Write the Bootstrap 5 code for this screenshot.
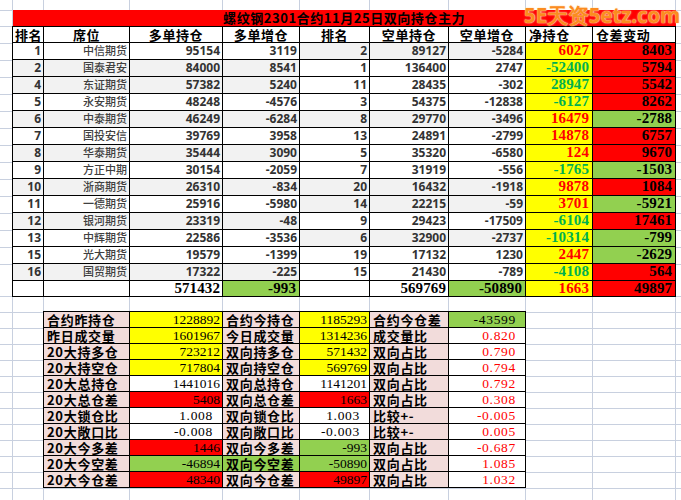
<!doctype html>
<html lang="zh"><head><meta charset="utf-8">
<link href="https://cdn.jsdelivr.net/npm/bootstrap@5.3.0/dist/css/bootstrap.min.css" rel="stylesheet">
<style>
:root{--gl:#c8d0df}
body{background-color:#fff;margin:0;height:500px;overflow:hidden;background-repeat:no-repeat;
background-image:
linear-gradient(var(--gl),var(--gl)),linear-gradient(var(--gl),var(--gl)),linear-gradient(var(--gl),var(--gl)),linear-gradient(var(--gl),var(--gl)),linear-gradient(var(--gl),var(--gl)),linear-gradient(var(--gl),var(--gl)),linear-gradient(var(--gl),var(--gl)),linear-gradient(var(--gl),var(--gl)),linear-gradient(var(--gl),var(--gl)),linear-gradient(var(--gl),var(--gl)),
linear-gradient(var(--gl),var(--gl)),linear-gradient(var(--gl),var(--gl)),
repeating-linear-gradient(var(--gl) 0 1px,transparent 1px 17px),
repeating-linear-gradient(var(--gl) 0 1px,transparent 1px 16px);
background-size:1px 100%,1px 100%,1px 100%,1px 100%,1px 100%,1px 100%,1px 100%,1px 100%,1px 100%,1px 100%,100% 1px,100% 1px,100% 238px,100% 193px;
background-position:12px 0,43px 0,129px 0,222px 0,299px 0,369px 0,448px 0,525px 0,592px 0,675px 0,0 10px,0 26px,0 43px,0 296px}
.sheet{padding:10px 0 0 12px;width:681px}
.top-grid,.low-grid{border-collapse:collapse;table-layout:fixed;margin:0}
.top-grid td,.top-grid th,.low-grid td{border:1px solid #000;padding:0 2px;white-space:nowrap;line-height:13px;vertical-align:middle}
.top-grid{width:663px;font-family:"Noto Sans",sans-serif;color:#333}
.top-grid td{height:17px;font-size:12px;font-weight:700;text-align:right;background:#fff}
.top-grid th{height:16px;font-family:"Noto Sans CJK SC",sans-serif;font-size:13px;font-weight:700;text-align:center;color:#000;background:#fff;letter-spacing:.6px}
.top-grid th.left{text-align:left;padding-left:3px}
.top-grid th.title{background:#f00;border-top:0;border-left:0;border-right:0;letter-spacing:.55px}
.top-grid tr.lg td:nth-child(-n+4),.top-grid tr.rg td:nth-child(n+5):nth-child(-n+7){background:#f2f2f2}
.top-grid td.cn{font-family:"Noto Sans CJK SC",sans-serif;font-size:11px;font-weight:500;color:#404040}
.top-grid tr.tot td{height:16px}
.top-grid td.sum{font-family:"Liberation Serif",serif;font-size:15px;color:#000;letter-spacing:.1px}
.top-grid tr td.y,.top-grid tr td.r,.top-grid tr td.g{font-family:"Liberation Serif",serif;font-size:15px;padding-right:3px;color:#000;letter-spacing:.1px}
.top-grid tr td.y{background:#ff0}.top-grid tr td.r{background:#f00}.top-grid tr td.g{background:#92d050}
.top-grid tr td.txt-r{color:#f00}.top-grid tr td.txt-g{color:#00b050}
.low-grid{width:482px;margin:14px 0 0 31px;font-family:"Liberation Serif",serif;color:#000}
.low-grid td{height:16px;font-size:13.5px;text-align:right;background:#fff}
.low-grid td.lab{font-family:"Noto Sans CJK SC",sans-serif;font-weight:700;font-size:13px;text-align:left;background:#f2dcdb;letter-spacing:.7px;padding-left:3px}
.low-grid td.yy{background:#ff0}.low-grid td.rr{background:#f00}.low-grid td.gg{background:#92d050}
.low-grid td.lab.gg{background:#92d050}
.low-grid td.red{color:#f00;padding-right:9px;letter-spacing:.7px}
.low-grid td.pr{padding-right:9px;letter-spacing:.7px}
.wm{position:absolute;left:524px;top:1px;font:700 20.5px/28px "Noto Sans",sans-serif;color:#fb8c1f;letter-spacing:-.1px;white-space:nowrap;text-shadow:0 0 2px #ffe0b0,0 0 1px #ffe0b0}
</style></head><body>
<div class="sheet">
<table class="table top-grid"><colgroup><col style="width:31px"><col style="width:86px"><col style="width:93px"><col style="width:77px"><col style="width:70px"><col style="width:79px"><col style="width:77px"><col style="width:67px"><col style="width:83px"></colgroup>
<thead><tr><th colspan="9" class="title">螺纹钢2301合约11月25日双向持仓主力</th></tr>
<tr><th>排名</th><th>席位</th><th>多单持仓</th><th>多单增仓</th><th>排名</th><th>空单持仓</th><th>空单增仓</th><th class="left">净持仓</th><th class="left">仓差变动</th></tr></thead>
<tbody>
<tr class="rg"><td>1</td><td class="cn">中信期货</td><td>95154</td><td>3119</td><td>2</td><td>89127</td><td>-5284</td><td class="y txt-r">6027</td><td class="r">8403</td></tr>
<tr class="lg"><td>2</td><td class="cn">国泰君安</td><td>84000</td><td>8541</td><td>1</td><td>136400</td><td>2747</td><td class="y txt-g">-52400</td><td class="r">5794</td></tr>
<tr class="lg"><td>4</td><td class="cn">东证期货</td><td>57382</td><td>5240</td><td>11</td><td>28435</td><td>-302</td><td class="y txt-g">28947</td><td class="r">5542</td></tr>
<tr><td>5</td><td class="cn">永安期货</td><td>48248</td><td>-4576</td><td>3</td><td>54375</td><td>-12838</td><td class="y txt-g">-6127</td><td class="r">8262</td></tr>
<tr class="lg rg"><td>6</td><td class="cn">中泰期货</td><td>46249</td><td>-6284</td><td>8</td><td>29770</td><td>-3496</td><td class="y txt-r">16479</td><td class="g">-2788</td></tr>
<tr><td>7</td><td class="cn">国投安信</td><td>39769</td><td>3958</td><td>13</td><td>24891</td><td>-2799</td><td class="y txt-r">14878</td><td class="r">6757</td></tr>
<tr class="lg"><td>8</td><td class="cn">华泰期货</td><td>35444</td><td>3090</td><td>5</td><td>35320</td><td>-6580</td><td class="y txt-r">124</td><td class="r">9670</td></tr>
<tr><td>9</td><td class="cn">方正中期</td><td>30154</td><td>-2059</td><td>7</td><td>31919</td><td>-556</td><td class="y txt-g">-1765</td><td class="g">-1503</td></tr>
<tr class="lg rg"><td>10</td><td class="cn">浙商期货</td><td>26310</td><td>-834</td><td>20</td><td>16432</td><td>-1918</td><td class="y txt-r">9878</td><td class="r">1084</td></tr>
<tr class="rg"><td>11</td><td class="cn">一德期货</td><td>25916</td><td>-5980</td><td>14</td><td>22215</td><td>-59</td><td class="y txt-r">3701</td><td class="g">-5921</td></tr>
<tr class="lg"><td>12</td><td class="cn">银河期货</td><td>23319</td><td>-48</td><td>9</td><td>29423</td><td>-17509</td><td class="y txt-g">-6104</td><td class="r">17461</td></tr>
<tr class="rg"><td>13</td><td class="cn">中辉期货</td><td>22586</td><td>-3536</td><td>6</td><td>32900</td><td>-2737</td><td class="y txt-g">-10314</td><td class="g">-799</td></tr>
<tr><td>15</td><td class="cn">光大期货</td><td>19579</td><td>-1399</td><td>19</td><td>17132</td><td>1230</td><td class="y txt-r">2447</td><td class="g">-2629</td></tr>
<tr class="lg"><td>16</td><td class="cn">国贸期货</td><td>17322</td><td>-225</td><td>15</td><td>21430</td><td>-789</td><td class="y txt-g">-4108</td><td class="r">564</td></tr>
<tr class="tot"><td></td><td></td><td class="sum">571432</td><td class="g">-993</td><td></td><td class="sum">569769</td><td class="g">-50890</td><td class="y txt-r">1663</td><td class="r">49897</td></tr>
</tbody></table>
<table class="table low-grid"><colgroup><col style="width:86px"><col style="width:93px"><col style="width:77px"><col style="width:70px"><col style="width:79px"><col style="width:77px"></colgroup>
<tbody>
<tr><td class="lab">合约昨持仓</td><td class="yy">1228892</td><td class="lab">合约今持仓</td><td class="yy">1185293</td><td class="lab">合约今仓差</td><td class="gg pr">-43599</td></tr>
<tr><td class="lab">昨日成交量</td><td class="yy">1601967</td><td class="lab">今日成交量</td><td class="yy">1314236</td><td class="lab">成交量比</td><td class="red">0.820</td></tr>
<tr><td class="lab">20大持多仓</td><td class="yy">723212</td><td class="lab">双向持多仓</td><td class="yy">571432</td><td class="lab">双向占比</td><td class="red">0.790</td></tr>
<tr><td class="lab">20大持空仓</td><td class="yy">717804</td><td class="lab">双向持空仓</td><td class="yy">569769</td><td class="lab">双向占比</td><td class="red">0.794</td></tr>
<tr><td class="lab">20大总持仓</td><td>1441016</td><td class="lab">双向总持仓</td><td>1141201</td><td class="lab">双向占比</td><td class="red">0.792</td></tr>
<tr><td class="lab">20大总仓差</td><td class="rr">5408</td><td class="lab">双向总仓差</td><td class="rr">1663</td><td class="lab">双向占比</td><td class="red">0.308</td></tr>
<tr><td class="lab">20大锁仓比</td><td class="pr">1.008</td><td class="lab">双向锁仓比</td><td class="pr">1.003</td><td class="lab">比较+-</td><td class="red">-0.005</td></tr>
<tr><td class="lab">20大敞口比</td><td class="pr">-0.008</td><td class="lab">双向敞口比</td><td class="pr">-0.003</td><td class="lab">比较+-</td><td class="red">0.005</td></tr>
<tr><td class="lab">20大今多差</td><td class="rr">1446</td><td class="lab">双向今多差</td><td class="gg">-993</td><td class="lab">双向占比</td><td class="red">-0.687</td></tr>
<tr><td class="lab">20大今空差</td><td class="gg">-46894</td><td class="lab gg">双向今空差</td><td class="gg">-50890</td><td class="lab">双向占比</td><td class="red">1.085</td></tr>
<tr><td class="lab">20大今仓差</td><td class="rr">48340</td><td class="lab">双向今仓差</td><td class="rr">49897</td><td class="lab">双向占比</td><td class="red">1.032</td></tr>
</tbody></table>
</div>
<div class="wm">5E天资5etz.com</div>
</body></html>
